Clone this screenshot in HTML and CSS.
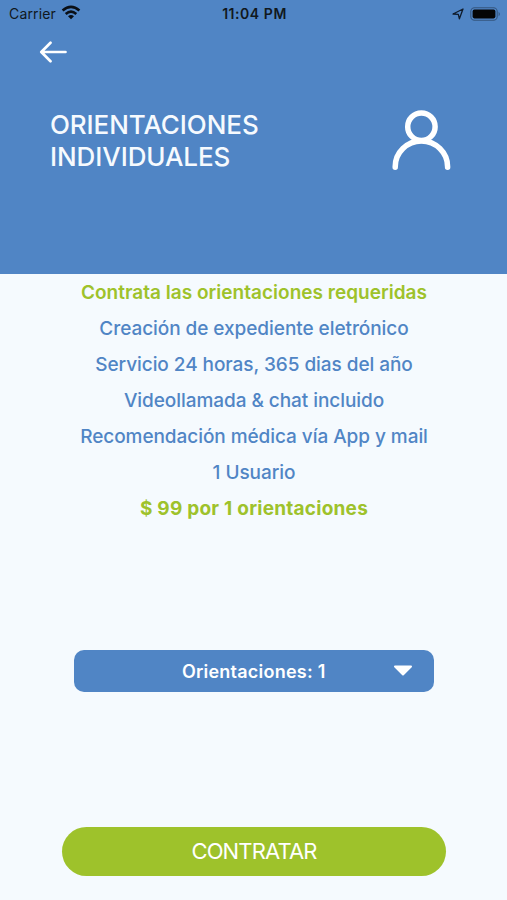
FILE: index.html
```html
<!DOCTYPE html>
<html lang="es">
<head>
<meta charset="utf-8">
<title>Orientaciones individuales</title>
<link rel="stylesheet" href="styles.css">
</head>
<body>
<header class="hero">
  <div class="status">
    <div class="carrier"><span class="carrier-name">Carrier</span>
      <svg class="wifi" width="20" height="15" viewBox="0 0 20 15" fill="none" stroke="#0a0f16" stroke-width="2.6"><path d="M1.6 5.6Q10-1.800 18.4 5.600M4.700 9Q10 4.400 15.300 9"/><path d="M7 11.200Q10 8.900 13 11.200L10 14.300Z" fill="#0a0f16" stroke="none"/></svg>
    </div>
    <span class="time">11:04 PM</span>
    <div class="indicators">
      <svg width="12" height="12" viewBox="0 0 12 12" fill="none" stroke="#101c2c" stroke-width="1.3" stroke-linejoin="round"><path d="M1 6 11 1 7.400 10.800 6.300 6.300Z"/></svg>
      <svg width="31" height="14" viewBox="0 0 31 14"><rect x=".8" y=".8" width="26.4" height="12.4" rx="3.8" fill="none" stroke="#34557d" stroke-width="1.1"/><rect x="2.6" y="2.6" width="22.8" height="8.8" rx="1.8" fill="#050505"/><path d="M28.600 4.700q2.600 2.300 0 4.600z" fill="#34557d"/></svg>
    </div>
  </div>
  <a class="back" aria-label="Volver"><svg width="28" height="22" viewBox="0 0 28 22" fill="none" stroke="#fff" stroke-width="2.7" stroke-linecap="round" stroke-linejoin="round"><path d="M26.500 11H2.500M11.500 1.800 2.300 11l9.200 9.200"/></svg></a>
  <div class="heading">
    <h1><span>ORIENTACIONES</span><br><span>INDIVIDUALES</span></h1>
    <svg class="person" width="60" height="62" viewBox="0 0 60 62" fill="none" stroke="#fff" stroke-width="5.5" stroke-linecap="round"><circle cx="30.400" cy="17.700" r="13.700"/><path d="M4.200 58.200V57.800C4.200 43.500 16 32 30.400 32S56.600 43.500 56.600 57.800V58.200"/></svg>
  </div>
</header>
<main>
  <div class="details">
    <p class="accent">Contrata las orientaciones requeridas</p>
    <p>Creación de expediente eletrónico</p>
    <p>Servicio 24 horas, 365 dias del año</p>
    <p>Videollamada &amp; chat incluido</p>
    <p>Recomendación médica vía App y mail</p>
    <p>1 Usuario</p>
    <p class="accent price">$ 99 por 1 orientaciones</p>
  </div>
  <button class="select"><span>Orientaciones: 1</span><svg width="20" height="12" viewBox="0 0 20 12"><path d="M2 1.500h16L10 9.500z" fill="#fff" stroke="#fff" stroke-width="2" stroke-linejoin="round"/></svg></button>
  <button class="submit"><span>CONTRATAR</span></button>
</main>
</body>
</html>
```

FILE: styles.css
```css
* { box-sizing: border-box; }
body { margin: 0; height: 900px; overflow: hidden; background: #f5fafe; font-family: Inter, "Liberation Sans", sans-serif; }
.hero { height: 274.4px; background: #5085c5; }
.status { display: grid; grid-template-columns: 1fr auto 1fr; align-items: center; height: 27px; padding: 0 6px 0 9px; font-size: 14px; color: #101820; }
.carrier { display: flex; align-items: center; gap: 5px; }
.carrier-name { letter-spacing: .15px; }
.wifi { margin-top: -2px; }
.time { font-weight: 600; letter-spacing: .55px; margin-right: 1px; }
.indicators { display: flex; justify-content: flex-end; align-items: center; gap: 6px; }
.back { display: block; width: 28px; height: 22px; margin: 14px 0 0 39px; }
.back svg, .person { display: block; }
.heading { display: flex; justify-content: space-between; margin: 46px 56px 0 50px; }
h1 { margin: 0; font-size: 26px; line-height: 32px; font-weight: 500; letter-spacing: -.08px; color: #f6fafe; white-space: nowrap; }
.details { display: flex; flex-direction: column; align-items: center; padding: 1px 0 0 1px; }
p { margin: 0; height: 35.9px; line-height: 36px; font-size: 19px; font-weight: 500; letter-spacing: -.06px; color: #5085c5; white-space: nowrap; }
.accent { color: #9ec22b; font-weight: 600; letter-spacing: .02px; }
.price { font-weight: 700; letter-spacing: .24px; }
button { border: 0; font-family: inherit; color: #fff; padding: 0; }
.select { display: grid; grid-template-columns: 1fr auto 1fr; align-items: center; width: 359.5px; height: 42.4px; margin: 123.2px 0 0 74px; border-radius: 10px; background: #5085c5; font-size: 18px; font-weight: 600; letter-spacing: .24px; }
.select span { grid-column: 2; }
.select svg { justify-self: end; margin-right: 21px; }
.submit { display: block; width: 384px; height: 49px; margin: 134.3px 0 0 62px; border-radius: 25px; background: #9ec22b; font-size: 22px; letter-spacing: -.85px; }
```
